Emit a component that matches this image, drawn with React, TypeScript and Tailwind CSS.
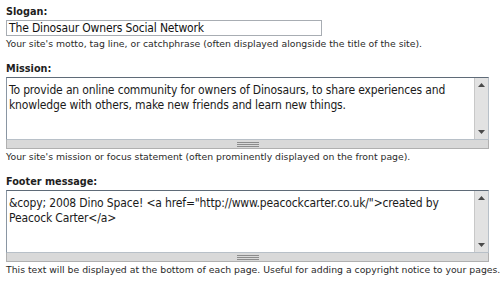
import React from "react";

const Up = () => (
  <svg width="7" height="4" viewBox="0 0 7 4"><path d="M0 4 L3.5 0 L7 4 Z" fill="#4a4a4a" /></svg>
);
const Down = () => (
  <svg width="7" height="4" viewBox="0 0 7 4"><path d="M0 0 L3.5 4 L7 0 Z" fill="#4a4a4a" /></svg>
);

function Area({ lines }: { lines: string[] }) {
  return (
    <div className="w-[483px]">
      <div className="flex h-[63px] border border-t-[#5f6b78] border-l-[#8a96a3] border-r-[#b8c0c8] border-b-[#b8c0c8] bg-white">
        <div className="min-w-0 flex-1 overflow-hidden px-[2px] pt-[5px] text-[12px] leading-[15px] tracking-[-0.15px] text-[#1a1a1a] [font-family:'DejaVu_Sans_Condensed','DejaVu_Sans',sans-serif]">
          {lines.map((l, i) => (
            <div key={i} className="whitespace-nowrap">{l}</div>
          ))}
        </div>
        <div className="flex w-[14px] shrink-0 flex-col items-center justify-between border-l border-[#c8c8c8] bg-[#e2e2e2] py-[5px]">
          <Up />
          <Down />
        </div>
      </div>
      <div className="flex h-[9px] items-center justify-center border border-t-0 border-[#b0b0b0] bg-[#d9d9d9]">
        <div className="flex w-[22px] flex-col gap-[1px]">
          <div className="h-[1px] bg-[#8c8c8c]" />
          <div className="h-[1px] bg-[#8c8c8c]" />
          <div className="h-[1px] bg-[#8c8c8c]" />
        </div>
      </div>
    </div>
  );
}

const label = "text-[10.8px] font-bold leading-[14px] text-[#1e1e1e] [font-family:'DejaVu_Sans_Condensed','DejaVu_Sans',sans-serif]";
const desc = "text-[9.3px] leading-[12px] text-[#2a2a2a] [font-family:'DejaVu_Sans',sans-serif] whitespace-nowrap";

export default function App() {
  return (
    <div className="h-[283px] w-[500px] overflow-hidden bg-white pl-[6px] pt-[5px]">
      <div className={label}>Slogan:</div>
      <div className="mt-[1px] flex h-[16px] w-[316px] items-center border border-[#a8adb3] bg-white px-[2px] text-[12px] tracking-[-0.15px] text-[#111] [font-family:'DejaVu_Sans_Condensed','DejaVu_Sans',sans-serif]">
        The Dinosaur Owners Social Network
      </div>
      <div className={desc + " mt-[2px]"}>
        Your site's motto, tag line, or catchphrase (often displayed alongside the title of the site).
      </div>

      <div className={label + " mt-[12px]"}>Mission:</div>
      <div className="mt-[1px]">
        <Area
          lines={[
            "To provide an online community for owners of Dinosaurs, to share experiences and",
            "knowledge with others, make new friends and learn new things.",
          ]}
        />
      </div>
      <div className={desc + " mt-[2px]"}>
        Your site's mission or focus statement (often prominently displayed on the front page).
      </div>

      <div className={label + " mt-[12px]"}>Footer message:</div>
      <div className="mt-[1px]">
        <Area
          lines={[
            '&copy; 2008 Dino Space! <a href="http://www.peacockcarter.co.uk/">created by',
            "Peacock Carter</a>",
          ]}
        />
      </div>
      <div className={desc + " mt-[2px]"}>
        This text will be displayed at the bottom of each page. Useful for adding a copyright notice to your pages.
      </div>
    </div>
  );
}
